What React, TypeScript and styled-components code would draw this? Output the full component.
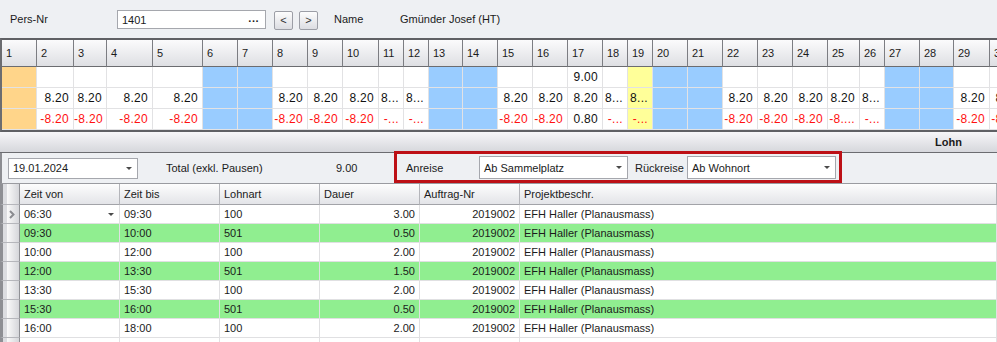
import React from 'react';
import styled, { createGlobalStyle, css } from 'styled-components';

type Tone = 'plain' | 'off' | 'free' | 'today';

const CAL_WIDTHS = [35, 37, 33, 46, 50, 35, 35, 35, 35, 36, 25, 25, 34, 35, 35, 35, 35, 25, 25, 35, 35, 35, 35, 35, 32, 25, 35, 34, 36, 35];

const toneOf = (i: number): Tone => {
  if (i === 0) return 'off';
  if (i === 18) return 'today';
  if ([5, 6, 12, 13, 19, 20, 26, 27].includes(i)) return 'free';
  return 'plain';
};

const e = '';
const CAL_ROWS: string[][] = [
  [e, e, e, e, e, e, e, e, e, e, e, e, e, e, e, e, '9.00', e, e, e, e, e, e, e, e, e, e, e, e, e],
  [e, '8.20', '8.20', '8.20', '8.20', e, e, '8.20', '8.20', '8.20', '8...', '8...', e, e, '8.20', '8.20', '8.20', '8...', '8...', e, e, '8.20', '8.20', '8.20', '8.20', '8...', e, e, '8.20', '8.20'],
  [e, '-8.20', '-8.20', '-8.20', '-8.20', e, e, '-8.20', '-8.20', '-8.20', '-...', '-...', e, e, '-8.20', '-8.20', '0.80', '-...', '-...', e, e, '-8.20', '-8.20', '-8.20', '-8....', '-...', e, e, '-8.20', '-8.20'],
];

const ENTRIES = [
  { from: '06:30', to: '09:30', type: '100', dur: '3.00' },
  { from: '09:30', to: '10:00', type: '501', dur: '0.50' },
  { from: '10:00', to: '12:00', type: '100', dur: '2.00' },
  { from: '12:00', to: '13:30', type: '501', dur: '1.50' },
  { from: '13:30', to: '15:30', type: '100', dur: '2.00' },
  { from: '15:30', to: '16:00', type: '501', dur: '0.50' },
  { from: '16:00', to: '18:00', type: '100', dur: '2.00' },
];

const TABLE_COLS = '20px repeat(5, 100px) 1fr';

const GlobalStyle = createGlobalStyle`
  html, body { margin: 0; padding: 0; }
  body {
    width: 997px;
    height: 342px;
    overflow: hidden;
    background: #eef0f3;
    font-family: 'Liberation Sans', Arial, sans-serif;
    font-size: 11px;
    color: #1b1b1b;
  }
  * { box-sizing: border-box; }
`;

const Page = styled.div`
  display: flex;
  flex-direction: column;
  width: 997px;
  height: 342px;
  overflow: hidden;
`;

/* ---------- top bar ---------- */

const TopBar = styled.div`
  height: 38px;
  display: flex;
  align-items: center;
  padding-left: 10px;
  flex-shrink: 0;
`;

const Label = styled.span<{ $w?: number }>`
  width: ${(p) => (p.$w ? `${p.$w}px` : 'auto')};
  flex-shrink: 0;
  white-space: nowrap;
`;

const TextInput = styled.div`
  width: 149px;
  height: 19px;
  margin-top: 1px;
  background: #fff;
  border: 1px solid #a5a7ad;
  display: flex;
  align-items: center;
  justify-content: space-between;
  padding: 0 6px 0 4px;
`;

const Dots = styled.span`
  font-weight: 700;
  letter-spacing: 0.5px;
  margin-top: -3px;
`;

const NavButton = styled.div<{ $ml: number }>`
  width: 19px;
  height: 19px;
  margin-top: 2px;
  margin-left: ${(p) => p.$ml}px;
  border: 1px solid #9c9ea6;
  border-radius: 2px;
  background: linear-gradient(#fdfdfd, #dcdde2);
  display: flex;
  align-items: center;
  justify-content: center;
  font-size: 11px;
  color: #333;
`;

/* ---------- calendar ---------- */

const CalPanel = styled.div`
  border-top: 2px solid #5f6064;
  border-bottom: 2px solid #5f6064;
  border-left: 2px solid #6b6c70;
  overflow: hidden;
  background: #fff;
  flex-shrink: 0;
`;

const CalGrid = styled.div<{ $cols: string }>`
  display: grid;
  grid-template-columns: ${(p) => p.$cols};
  width: max-content;
`;

const CalHead = styled.div`
  height: 27px;
  padding-left: 4px;
  display: flex;
  align-items: center;
  border-right: 1px solid #7c7d82;
  border-bottom: 1px solid #6b6c70;
  background: linear-gradient(#fbfbfc, #dedfe3);
  font-size: 11px;
`;

const toneBg: Record<Tone, string> = {
  plain: '#ffffff',
  off: '#ffd58a',
  free: '#99ccff',
  today: '#ffff99',
};

const CalCell = styled.div<{ $tone: Tone; $neg: boolean }>`
  height: 21px;
  line-height: 20px;
  padding-right: 4px;
  text-align: right;
  white-space: nowrap;
  overflow: hidden;
  font-size: 12px;
  letter-spacing: 0.3px;
  background: ${(p) => toneBg[p.$tone]};
  color: ${(p) => (p.$neg ? '#ff1010' : '#111')};
  border-right: 1px solid #e2e2e4;
  border-bottom: 1px solid #e2e2e4;
`;

/* ---------- lohn bar + filters ---------- */

const LohnBar = styled.div`
  height: 21px;
  flex-shrink: 0;
  display: flex;
  align-items: center;
  justify-content: flex-end;
  padding-right: 35px;
  font-weight: 700;
  background: linear-gradient(#f6f6f8, #d6d7dc);
  border-bottom: 1px solid #6b6c70;
`;

const FilterRow = styled.div`
  height: 31px;
  flex-shrink: 0;
  display: flex;
  align-items: center;
  border-left: 2px solid #8c8d92;
  border-bottom: 1px solid #9a9ba0;
  padding-left: 6px;
`;

const Combo = styled.div<{ $w: number; $h: number }>`
  width: ${(p) => p.$w}px;
  height: ${(p) => p.$h}px;
  flex-shrink: 0;
  background: #fff;
  border: 1px solid #a5a7ad;
  display: flex;
  align-items: center;
  justify-content: space-between;
  padding: 0 5px 0 4px;
`;

const Arrow = styled.span`
  width: 0;
  height: 0;
  border-left: 3.5px solid transparent;
  border-right: 3.5px solid transparent;
  border-top: 3.5px solid #4a4a4a;
`;

const TravelBox = styled.div`
  align-self: flex-start;
  margin-top: -2px;
  height: 32px;
  display: flex;
  align-items: center;
  padding: 1px 3px 0 9px;
  border: 3px solid #bd1016;
`;

/* ---------- entries table ---------- */

const Table = styled.div`
  display: grid;
  grid-template-columns: ${TABLE_COLS};
  flex: 1;
  align-content: start;
  background: #fff;
  overflow: hidden;
`;

const headCss = css`
  height: 21px;
  display: flex;
  align-items: center;
  padding-left: 4px;
  background: linear-gradient(#fdfdfd, #e3e4e8);
  border-right: 1px solid #b4b5ba;
  border-bottom: 1px solid #a2a3a8;
`;

const HeadCell = styled.div`
  ${headCss}
`;

const Indicator = styled.div<{ $head?: boolean }>`
  height: ${(p) => (p.$head ? 21 : 19)}px;
  display: flex;
  align-items: center;
  padding-left: 6px;
  border-left: 3px solid #8e8f94;
  border-right: 1px solid #8f9095;
  border-bottom: 1px solid #b5b6bb;
  background: linear-gradient(to right, #dcdde1 0 4px, #fafafa 4px, #d5d6da 100%);
`;

const Cell = styled.div<{ $green: boolean; $right?: boolean }>`
  height: 19px;
  display: flex;
  align-items: center;
  justify-content: ${(p) => (p.$right ? 'flex-end' : 'space-between')};
  padding: 0 ${(p) => (p.$right ? 4 : 5)}px 0 4px;
  white-space: nowrap;
  overflow: hidden;
  background: ${(p) => (p.$green ? '#90ee90' : '#fff')};
  border-right: 1px solid #e0e0e2;
  border-bottom: 1px solid #e0e0e2;
`;

const RowArrow = () => (
  <svg width="6" height="9" viewBox="0 0 6 9">
    <polyline points="1,1 4.5,4.5 1,8" fill="none" stroke="#8a8b90" strokeWidth="2" />
  </svg>
);

const App = (): JSX.Element => {
  const calCols = CAL_WIDTHS.map((w) => `${w}px`).join(' ');

  return (
    <Page>
      <GlobalStyle />
      <TopBar>
        <Label $w={107}>Pers-Nr</Label>
        <TextInput>
          <span>1401</span>
          <Dots>...</Dots>
        </TextInput>
        <NavButton $ml={8}>&lt;</NavButton>
        <NavButton $ml={6}>&gt;</NavButton>
        <Label $w={66} style={{ marginLeft: 16 }}>Name</Label>
        <Label>Gmünder Josef (HT)</Label>
      </TopBar>

      <CalPanel>
        <CalGrid $cols={calCols}>
          {CAL_WIDTHS.map((_, i) => (
            <CalHead key={`h${i}`}>{i + 1}</CalHead>
          ))}
          {CAL_ROWS.map((row, r) =>
            row.map((v, i) => (
              <CalCell key={`${r}-${i}`} $tone={toneOf(i)} $neg={v.startsWith('-')}>
                {v}
              </CalCell>
            )),
          )}
        </CalGrid>
      </CalPanel>

      <LohnBar>Lohn</LohnBar>

      <FilterRow>
        <Combo $w={130} $h={21}>
          <span>19.01.2024</span>
          <Arrow />
        </Combo>
        <Label $w={170} style={{ marginLeft: 28 }}>Total (exkl. Pausen)</Label>
        <Label $w={58}>9.00</Label>
        <TravelBox>
          <Label $w={73}>Anreise</Label>
          <Combo $w={149} $h={23}>
            <span>Ab Sammelplatz</span>
            <Arrow />
          </Combo>
          <Label $w={52} style={{ marginLeft: 7 }}>Rückreise</Label>
          <Combo $w={149} $h={23}>
            <span>Ab Wohnort</span>
            <Arrow />
          </Combo>
        </TravelBox>
      </FilterRow>

      <Table>
        <Indicator $head />
        {['Zeit von', 'Zeit bis', 'Lohnart', 'Dauer', 'Auftrag-Nr', 'Projektbeschr.'].map((h) => (
          <HeadCell key={h}>{h}</HeadCell>
        ))}
        {ENTRIES.map((row, i) => {
          const green = row.type === '501';
          return (
            <React.Fragment key={i}>
              <Indicator>{i === 0 && <RowArrow />}</Indicator>
              <Cell $green={green}>
                <span>{row.from}</span>
                {i === 0 && <Arrow />}
              </Cell>
              <Cell $green={green}>{row.to}</Cell>
              <Cell $green={green}>{row.type}</Cell>
              <Cell $green={green} $right>{row.dur}</Cell>
              <Cell $green={green} $right>2019002</Cell>
              <Cell $green={green}>EFH Haller (Planausmass)</Cell>
            </React.Fragment>
          );
        })}
        <Indicator />
        {[0, 1, 2, 3, 4, 5].map((c) => (
          <Cell key={c} $green={false} />
        ))}
      </Table>
    </Page>
  );
};

export default App;
